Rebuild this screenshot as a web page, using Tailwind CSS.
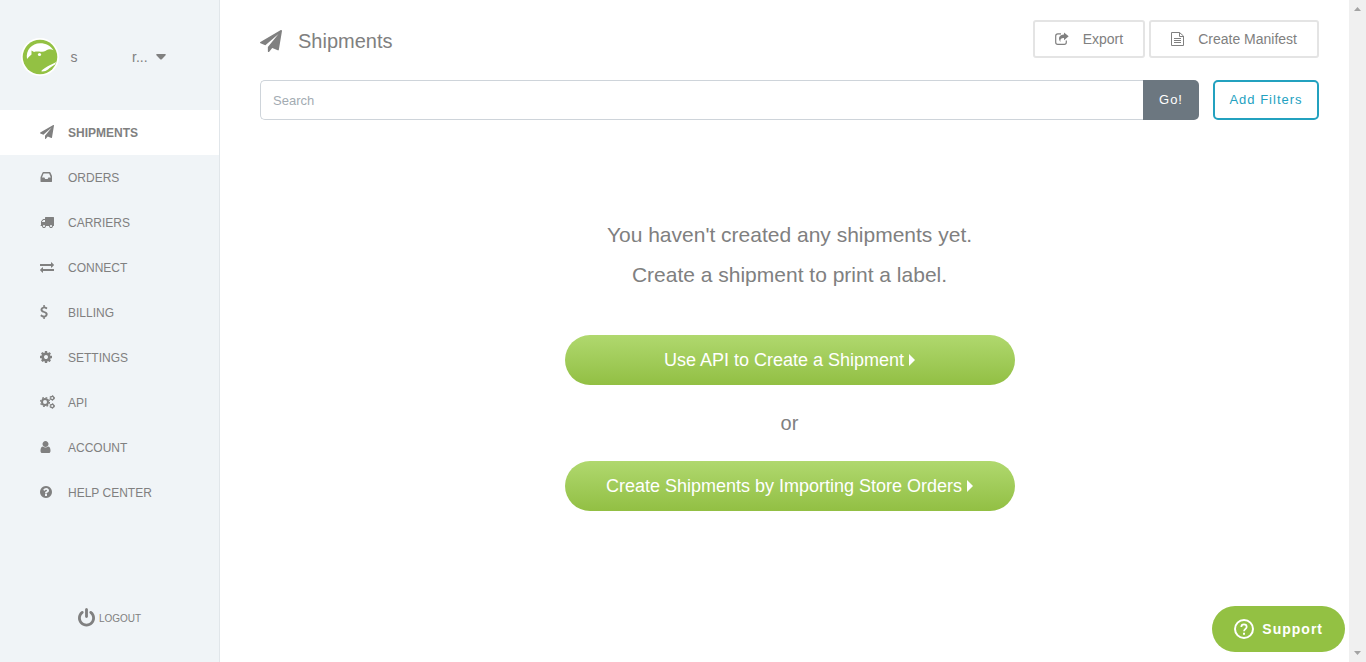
<!DOCTYPE html>
<html lang="en">
<head>
  <meta charset="UTF-8" />
  <meta name="viewport" content="width=device-width, initial-scale=1.0" />
  <title>Shipments</title>
  <script src="https://cdn.jsdelivr.net/npm/@tailwindcss/browser@4"></script>
</head>
<body class="flex h-screen overflow-hidden bg-white text-[#808080] font-['Liberation_Sans',Arial,sans-serif]">

  <!-- Sidebar -->
  <aside class="flex w-[220px] shrink-0 flex-col border-r border-[#e1e6ea] bg-[#f0f4f7]">
    <button class="flex h-[110px] items-center pt-1 pl-[21px] text-sm">
      <svg class="size-[38px]" viewBox="0 0 38 38" aria-hidden="true">
        <circle cx="19" cy="19" r="19" fill="#fff" />
        <circle cx="19" cy="19" r="17.3" fill="#93c143" />
        <path d="M6 21C4.500 12 11 5.200 19 5.200c6 0 10.500 2.600 13.500 7-2.500-1.200-5-1.200-7 0-1.500 1-3.500 1.500-6 1.500-2.500-.2-4.500-.2-6.500.2L10.500 12.500v4C9 17.500 7.500 19 6 21z" fill="#fff" />
        <circle cx="18.500" cy="16.500" r="1.600" fill="#fff" />
        <path d="M35.500 23.500c-2 2.500-11 4.500-15.500 9.800 3 .3 5-.3 7-1.800 2-2 5-4 7-5z" fill="#fff" />
      </svg>
      <span class="ml-[11px] w-2">s</span>
      <span class="ml-[54px]">r...</span>
      <svg class="ml-2 h-[6px] w-[10px]" viewBox="0 0 10 6" fill="currentColor" aria-hidden="true"><path d="M1 0h8q1 0 .8 1L5.800 5.200q-.8.800-1.600 0L.2 1Q0 0 1 0z" /></svg>
    </button>

    <nav class="flex flex-col text-xs">
      <a href="#" class="flex h-[45px] items-center bg-white pl-10 font-bold">
        <span class="w-7 pb-[2px]"><svg class="size-[14px]" viewBox="0 0 1792 1792" fill="currentColor"><path d="M1764 11q33 24 27 64l-256 1536q-5 29-32 45-14 8-31 8-11 0-24-5l-453-185-242 295q-18 23-49 23-13 0-22-4-19-7-30.500-23.500t-11.500-36.500v-349l864-1059-1069 925-395-162q-37-14-40-55-2-40 32-59l1664-960q15-9 32-9 20 0 36 11z" /></svg></span>
        SHIPMENTS
      </a>
      <a href="#" class="flex h-[45px] items-center pl-10">
        <span class="w-7 pb-[2px]"><svg class="h-[14px] w-3" viewBox="128 0 1536 1792" fill="currentColor"><path d="M1195 960h317q0-3-1-8t-1-8l-212-496h-708l-212 496q-1 2-1 8t-1 8h317l95 192h320zm469 30v482q0 26-19 45t-45 19h-1344q-26 0-45-19t-19-45v-482q0-62 25-123l238-552q10-25 36.500-42t52.500-17h832q26 0 52.500 17t36.500 42l238 552q25 61 25 123z" /></svg></span>
        ORDERS
      </a>
      <a href="#" class="flex h-[45px] items-center pl-10">
        <span class="w-7 pb-[2px]"><svg class="size-[14px]" viewBox="0 0 1792 1792" fill="currentColor"><path d="M640 1408q0-52-38-90t-90-38-90 38-38 90 38 90 90 38 90-38 38-90zm-384-512h384v-256h-158q-13 0-22 9l-195 195q-9 9-9 22v30zm1280 512q0-52-38-90t-90-38-90 38-38 90 38 90 90 38 90-38 38-90zm256-1088v1024q0 15-4 26.500t-13.500 18.500-16.500 11.500-23.500 6-22.500 2-25.500 0-22.500-.5q0 106-75 181t-181 75-181-75-75-181h-384q0 106-75 181t-181 75-181-75-75-181h-64q-3 0-22.500.5t-25.500 0-22.500-2-23.500-6-16.500-11.500-13.500-18.500-4-26.500q0-26 19-45t45-19v-320q0-8-.5-35t0-38 2.500-34.500 6.500-37 14-30.500 22.500-30l198-198q19-19 50.500-32t58.500-13h160v-192q0-26 19-45t45-19h1024q26 0 45 19t19 45z" /></svg></span>
        CARRIERS
      </a>
      <a href="#" class="flex h-[45px] items-center pl-10">
        <span class="w-7 pb-[2px]"><svg class="size-[14px]" viewBox="0 0 1792 1792" fill="currentColor"><path d="M1792 1184v192q0 13-9.500 22.500t-22.500 9.500h-1376v192q0 13-9.500 22.500t-22.500 9.500q-12 0-24-10l-319-320q-9-9-9-22 0-14 9-23l320-320q9-9 23-9 13 0 22.500 9.500t9.500 22.500v192h1376q13 0 22.500 9.500t9.500 22.500zm0-544q0 14-9 23l-320 320q-9 9-23 9-13 0-22.500-9.500t-9.500-22.500v-192h-1376q-13 0-22.500-9.500t-9.500-22.500v-192q0-13 9.500-22.500t22.500-9.500h1376v-192q0-14 9-23t23-9q12 0 24 10l319 319q9 9 9 23z" /></svg></span>
        CONNECT
      </a>
      <a href="#" class="flex h-[45px] items-center pl-10">
        <span class="w-7 pb-[2px]"><svg class="h-[14px] w-2" viewBox="384 0 1024 1792" fill="currentColor"><path d="M1362 1185q0 153-99.500 263.500t-258.500 136.500v175q0 14-9 23t-23 9h-135q-13 0-22.500-9.500t-9.500-22.500v-175q-66-9-127.500-31t-101.500-44.500-74-48-46.500-37.500-17.500-18q-17-21-2-41l103-135q7-10 23-12 15-2 24 9l2 2q113 99 243 125 37 8 74 8 81 0 142.500-43t61.500-122q0-28-15-53t-33.500-42-58.500-37.500-66-32-80-32.500q-39-16-61.500-25t-61.500-26.500-62.500-31-56.500-35.500-53.500-42.500-43.500-49-35.500-58-21-66.500-8.500-78q0-138 98-242t255-134v-180q0-13 9.500-22.500t22.500-9.500h135q14 0 23 9t9 23v176q57 6 110.500 23t87 33.500 63.500 37.500 39 29 15 14q17 18 5 38l-81 146q-8 15-23 16-14 3-27-7-3-3-14.500-12t-39-26.500-58.500-32-74.500-26-85.500-11.500q-95 0-155 43t-60 111q0 26 8.500 48t29.500 41.500 39.500 33 56 31 60.500 27 70 27.500q53 20 81 31.500t76 35 75.500 42.500 62 50 53 63.500 31.500 76.500 13 94z" /></svg></span>
        BILLING
      </a>
      <a href="#" class="flex h-[45px] items-center pl-10">
        <span class="w-7 pb-[2px]"><svg class="h-[14px] w-3" viewBox="128 0 1536 1792" fill="currentColor"><path d="M1152 896q0-106-75-181t-181-75-181 75-75 181 75 181 181 75 181-75 75-181zm512-109v222q0 12-8 23t-20 13l-185 28q-19 54-39 91 35 50 107 138 10 12 10 25t-9 23q-27 37-99 108t-94 71q-12 0-26-9l-138-108q-44 23-91 38-16 136-29 186-7 28-36 28h-222q-14 0-24.500-8.500t-11.500-21.500l-28-184q-49-16-90-37l-141 107q-10 9-25 9-14 0-25-11-126-114-165-168-7-10-7-23 0-12 8-23 15-21 51-66.500t54-70.500q-27-50-41-99l-183-27q-13-2-21-12.500t-8-23.500v-222q0-12 8-23t19-13l186-28q14-46 39-92-40-57-107-138-10-12-10-24 0-10 9-23 26-36 98.500-107.500t94.500-71.500q13 0 26 10l138 107q44-23 91-38 16-136 29-186 7-28 36-28h222q14 0 24.500 8.500t11.500 21.500l28 184q49 16 90 37l142-107q9-9 24-9 13 0 25 10 129 119 165 170 7 8 7 22 0 12-8 23-15 21-51 66.500t-54 70.500q26 50 41 98l183 28q13 2 21 12.500t8 23.500z" /></svg></span>
        SETTINGS
      </a>
      <a href="#" class="flex h-[45px] items-center pl-10">
        <span class="w-7 pb-[2px]">
          <svg class="h-[14px] w-[15px]" viewBox="0 0 15 14" fill="none" stroke="currentColor">
            <circle cx="5" cy="7" r="3" stroke-width="2" />
            <circle cx="5" cy="7" r="4.500" stroke-width="1.200" stroke-dasharray="1.770 1.770" />
            <circle cx="12.200" cy="3" r="1.600" stroke-width="1.200" />
            <circle cx="12.200" cy="3" r="2.400" stroke-width="1" stroke-dasharray="1.250 1.250" />
            <circle cx="12.200" cy="11" r="1.600" stroke-width="1.200" />
            <circle cx="12.200" cy="11" r="2.400" stroke-width="1" stroke-dasharray="1.250 1.250" />
          </svg>
        </span>
        API
      </a>
      <a href="#" class="flex h-[45px] items-center pl-10">
        <span class="w-7 pb-[2px]"><svg class="h-[14px] w-[11px]" viewBox="256 0 1280 1792" fill="currentColor"><path d="M1536 1399q0 109-62.500 187t-150.500 78h-854q-88 0-150.500-78t-62.500-187q0-85 8.500-160.500t31.500-152 58.500-131 94-89 134.500-34.500q131 128 313 128t313-128q76 0 134.500 34.500t94 89 58.500 131 31.500 152 8.500 160.500zm-256-887q0 159-112.500 271.500t-271.500 112.500-271.500-112.500-112.500-271.500 112.500-271.500 271.500-112.500 271.500 112.500 112.500 271.500z" /></svg></span>
        ACCOUNT
      </a>
      <a href="#" class="flex h-[45px] items-center pl-10">
        <span class="w-7 pb-[2px]"><svg class="h-[14px] w-3" viewBox="128 0 1536 1792" fill="currentColor"><path d="M1024 1376v-192q0-14-9-23t-23-9h-192q-14 0-23 9t-9 23v192q0 14 9 23t23 9h192q14 0 23-9t9-23zm256-672q0-88-55.500-163t-138.500-116-170-41q-243 0-371 213-15 24 8 42l132 100q7 6 19 6 16 0 25-12 53-68 86-92 34-24 86-24 48 0 85.500 26t37.500 59q0 38-20 61t-68 45q-63 28-115.500 86.500t-52.500 125.500v36q0 14 9 23t23 9h192q14 0 23-9t9-23q0-19 21.500-49.500t54.500-49.500q32-18 49-28.500t46-35 44.500-48 28-60.500 12.500-81zm384 192q0 209-103 385.500t-279.500 279.500-385.500 103-385.500-103-279.500-279.500-103-385.500 103-385.500 279.500-279.500 385.500-103 385.500 103 279.500 279.500 103 385.500z" /></svg></span>
        HELP CENTER
      </a>
    </nav>

    <a href="#" class="mt-auto mb-8 flex items-center justify-center gap-1 text-[10px] leading-5">
      <svg class="mb-[2px] h-5 w-[17px]" viewBox="128 0 1536 1792" fill="currentColor"><path d="M1664 896q0 156-61 298t-164 245-245 164-298 61-298-61-245-164-164-245-61-298q0-182 80.500-343t226.500-270q43-32 95.500-25t83.500 50q32 42 24.500 94.500t-49.500 84.500q-98 74-151.500 181t-53.500 228q0 104 40.500 198.500t109.500 163.500 163.500 109.500 198.500 40.500 198.500-40.500 163.500-109.500 109.500-163.500 40.500-198.500q0-121-53.500-228t-151.500-181q-42-32-49.500-84.500t24.500-94.500q31-43 84-50t95 25q146 109 226.500 270t80.500 343zm-640-768v640q0 52-38 90t-90 38-90-38-38-90v-640q0-52 38-90t90-38 90 38 38 90z" /></svg>
      LOGOUT
    </a>
  </aside>

  <!-- Content -->
  <main class="min-w-0 grow pt-5 pr-[30px] pl-10">
    <header class="flex items-center justify-between">
      <h1 class="flex items-center gap-4 pt-1 text-xl">
        <svg class="size-[22px]" viewBox="0 0 1792 1792" fill="currentColor"><path d="M1764 11q33 24 27 64l-256 1536q-5 29-32 45-14 8-31 8-11 0-24-5l-453-185-242 295q-18 23-49 23-13 0-22-4-19-7-30.500-23.500t-11.500-36.500v-349l864-1059-1069 925-395-162q-37-14-40-55-2-40 32-59l1664-960q15-9 32-9 20 0 36 11z" /></svg>
        Shipments
      </h1>
      <div class="flex gap-1 text-sm">
        <button class="flex h-[38px] items-center gap-[14px] rounded-[3px] border-2 border-[#e4e4e4] px-5">
          <svg class="size-[14px]" viewBox="0 0 14 14" fill="none" aria-hidden="true">
            <path d="M6 1.800H2.800Q.7 1.800.7 3.900v6.400q0 2.100 2.100 2.100h6.400q2.100 0 2.100-2.100V8.500" stroke="currentColor" stroke-width="1.200" />
            <path d="M9 .4l4.700 3.900L9 8.200V6C6 5.900 4.900 7.300 5.500 10 2.500 6.500 4.300 2.500 9 2.500z" fill="currentColor" />
          </svg>
          Export
        </button>
        <button class="flex h-[38px] items-center gap-[14px] rounded-[3px] border-2 border-[#e4e4e4] px-5">
          <svg class="h-[14px] w-[13px]" viewBox="0 0 13 14" fill="none" stroke="currentColor" aria-hidden="true">
            <path d="M.5.500h8l4 3.500v9.500H.5zM8.500.500v4h4M3 6.500h7M3 8.500h7M3 10.500h7" />
          </svg>
          Create Manifest
        </button>
      </div>
    </header>

    <form class="mt-[22px] flex h-10 text-[13px]">
      <input type="text" aria-label="Search" placeholder="Search" class="min-w-0 grow rounded-l-[5px] border border-r-0 border-[#ced4da] px-3 pt-[2px] outline-none placeholder:text-[#a3abb2]" />
      <button type="button" class="w-14 rounded-r-[5px] bg-[#6c7780] tracking-[1px] text-white">Go!</button>
      <button type="button" class="ml-[14px] w-[106px] rounded-[5px] border-2 border-[#23a1bf] tracking-[1px] text-[#23a1bf]">Add Filters</button>
    </form>

    <section class="flex flex-col items-center pt-[95px] text-center">
      <p class="text-[21px] leading-10">You haven't created any shipments yet.<br />Create a shipment to print a label.</p>
      <a href="#" class="mt-10 flex h-[50px] w-full max-w-[450px] items-center justify-center gap-[5px] rounded-full bg-linear-to-b from-[#b0d86e] to-[#92bf43] text-lg text-white">
        Use API to Create a Shipment
        <svg class="h-3 w-[6px]" viewBox="0 0 6 12" fill="currentColor"><path d="M0 0l6 6-6 6z" /></svg>
      </a>
      <p class="my-6 text-xl leading-7">or</p>
      <a href="#" class="flex h-[50px] w-full max-w-[450px] items-center justify-center gap-[5px] rounded-full bg-linear-to-b from-[#b0d86e] to-[#92bf43] text-lg text-white">
        Create Shipments by Importing Store Orders
        <svg class="h-3 w-[6px]" viewBox="0 0 6 12" fill="currentColor"><path d="M0 0l6 6-6 6z" /></svg>
      </a>
    </section>
  </main>

  <!-- Scroll track -->
  <div class="flex w-[17px] shrink-0 flex-col items-center justify-between bg-[#f0f0f0] py-[7px] text-[#a3a3a3]" aria-hidden="true">
    <svg class="h-1 w-[7px]" viewBox="0 0 7 4" fill="currentColor"><path d="M0 4l3.500-4L7 4z" /></svg>
    <svg class="h-1 w-[7px]" viewBox="0 0 7 4" fill="currentColor"><path d="M0 0h7L3.500 4z" /></svg>
  </div>

  <button class="fixed right-[21px] bottom-[10px] flex h-[46px] items-center gap-2 rounded-full bg-[#93c143] px-[22px] text-sm font-bold tracking-[1px] text-white">
    <svg class="size-5" viewBox="0 0 20 20" fill="none" stroke="currentColor" aria-hidden="true">
      <circle cx="10" cy="10" r="9" stroke-width="2" />
      <path d="M7.300 8c0-3.500 5.400-3.500 5.400 0 0 2-2.700 2-2.700 4.300" stroke-width="1.700" />
      <path d="M10 13.700v2" stroke-width="2" />
    </svg>
    Support
  </button>

</body>
</html>
